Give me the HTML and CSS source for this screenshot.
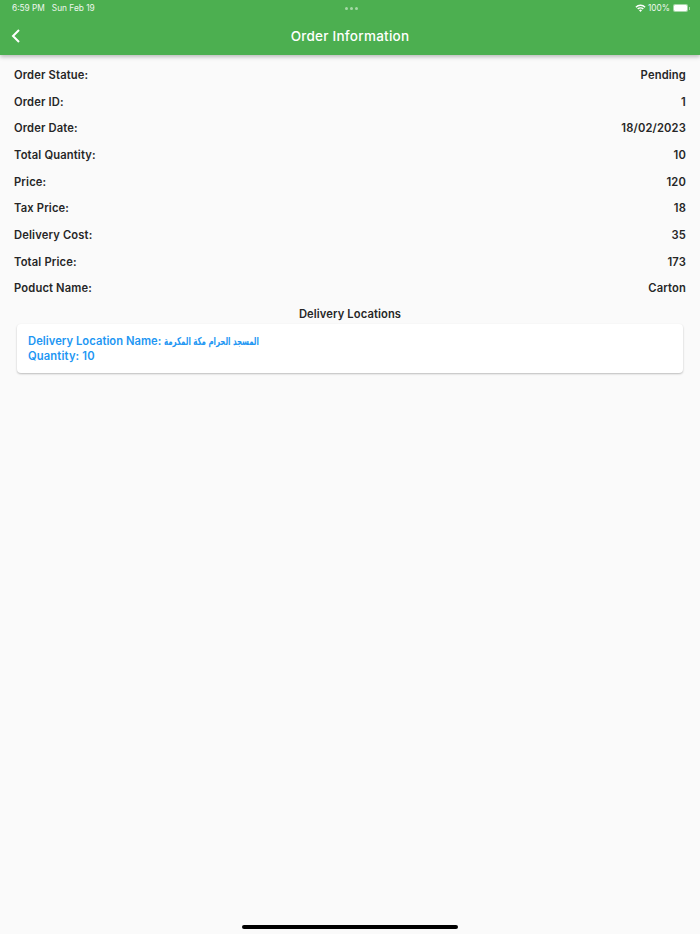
FILE: index.html
```html
<!DOCTYPE html>
<html>
<head lang="en">
    <meta charset="UTF-8">
    <title>Order Information</title>
    <link rel="stylesheet" href="styles.css">
</head>
<body>
<div class="page">
    <div class="header">
        <div class="status">
            <div class="status-left"><span>6:59 PM</span><span>Sun Feb 19</span></div>
            <div class="dots"><i></i><i></i><i></i></div>
            <div class="status-right">
                <svg class="wifi" width="11" height="8" viewBox="0 0 11 8">
                    <path d="M0.4 2.7A7.2 7.2 0 0 1 10.6 2.7L9.6 3.7A5.8 5.8 0 0 0 1.4 3.7Z" fill="#fff"/>
                    <path d="M2.2 4.5A4.7 4.7 0 0 1 8.8 4.5L7.8 5.5A3.3 3.3 0 0 0 3.2 5.5Z" fill="#fff"/>
                    <path d="M4 6.3A2.1 2.1 0 0 1 7 6.3L5.5 7.9Z" fill="#fff"/>
                </svg>
                <span>100%</span>
                <div class="battery"></div>
                <div class="battery-nub"></div>
            </div>
        </div>
        <div class="toolbar">
            <svg class="back" width="10" height="14" viewBox="0 0 10 14">
                <path d="M8 1L2 7L8 13" fill="none" stroke="#fff" stroke-width="2"/>
            </svg>
            <div class="title">Order Information</div>
        </div>
    </div>

    <div class="content">
        <div class="row"><span>Order Statue:</span><span>Pending</span></div>
        <div class="row"><span>Order ID:</span><span>1</span></div>
        <div class="row"><span>Order Date:</span><span>18/02/2023</span></div>
        <div class="row"><span>Total Quantity:</span><span>10</span></div>
        <div class="row"><span>Price:</span><span>120</span></div>
        <div class="row"><span>Tax Price:</span><span>18</span></div>
        <div class="row"><span>Delivery Cost:</span><span>35</span></div>
        <div class="row"><span>Total Price:</span><span>173</span></div>
        <div class="row"><span>Poduct Name:</span><span>Carton</span></div>
        <div class="section-title">Delivery Locations</div>
        <div class="card">
            <div class="card-line"><span>Delivery Location Name:</span><span class="arabic">المسجد الحرام مكة المكرمة</span></div>
            <div>Quantity: 10</div>
        </div>
    </div>
    <div class="home-bar"></div>
</div>
</body>
</html>
```

FILE: styles.css
```css
*{
    margin: 0;
    padding: 0;
    box-sizing: border-box;
}
body{
    background: #fafafa;
    font-family: Inter, "Liberation Sans", sans-serif;
}
.page{
    width: 700px;
    height: 934px;
    display: flex;
    flex-direction: column;
    overflow: hidden;
}
.header{
    height: 55px;
    background: #4caf50;
    color: #fff;
    box-shadow: 0 2px 4px rgba(0,0,0,0.25);
    flex-shrink: 0;
}
.status{
    height: 16px;
    padding: 0 10px 0 12px;
    display: flex;
    align-items: center;
    justify-content: space-between;
    font-size: 8.3px;
    color: #eef7ee;
}
.status-left{
    width: 150px;
    display: flex;
    gap: 7px;
}
.dots{
    display: flex;
    gap: 2px;
}
.dots i{
    width: 3px;
    height: 3px;
    border-radius: 50%;
    background: #a5d8a7;
}
.status-right{
    width: 150px;
    display: flex;
    align-items: center;
    justify-content: flex-end;
    gap: 2px;
}
.battery{
    width: 15px;
    height: 8px;
    margin-left: 1px;
    border: 1px solid rgba(255,255,255,0.5);
    border-radius: 2px;
    background: #fff;
    background-clip: padding-box;
}
.battery-nub{
    width: 1px;
    height: 3px;
    margin-left: -1px;
    background: rgba(255,255,255,0.5);
}
.toolbar{
    height: 39px;
    padding-left: 11px;
    display: flex;
    align-items: center;
    position: relative;
}
.title{
    position: absolute;
    left: 0;
    right: 0;
    text-align: center;
    font-size: 13.5px;
    font-weight: 500;
    letter-spacing: 0.25px;
}
.content{
    padding: 6.67px 14px 0;
    font-size: 11.2px;
    font-weight: 600;
    letter-spacing: 0.15px;
    color: #262626;
}
.row{
    height: 26.67px;
    display: flex;
    align-items: center;
    justify-content: space-between;
}
.section-title{
    height: 22.3px;
    padding-top: 3.3px;
    display: flex;
    align-items: center;
    justify-content: center;
    letter-spacing: 0.1px;
}
.card{
    margin: 0 3px;
    height: 49px;
    padding: 10px 11px;
    background: #fff;
    border-radius: 4px;
    box-shadow: 0 1px 2px rgba(0,0,0,0.25);
    color: #2196f3;
    line-height: 15px;
}
.card-line{
    display: flex;
    gap: 3px;
    letter-spacing: 0.05px;
}
.arabic{
    width: 95px;
    direction: ltr;
    white-space: nowrap;
    font-family: "DejaVu Sans", sans-serif;
    font-size: 11px;
    font-weight: 600;
    font-stretch: condensed;
    letter-spacing: 0;
    transform: scaleX(0.71);
    transform-origin: left center;
}
.home-bar{
    width: 216px;
    height: 4px;
    margin: auto auto 5px;
    background: #000;
    border-radius: 2px;
}
```
